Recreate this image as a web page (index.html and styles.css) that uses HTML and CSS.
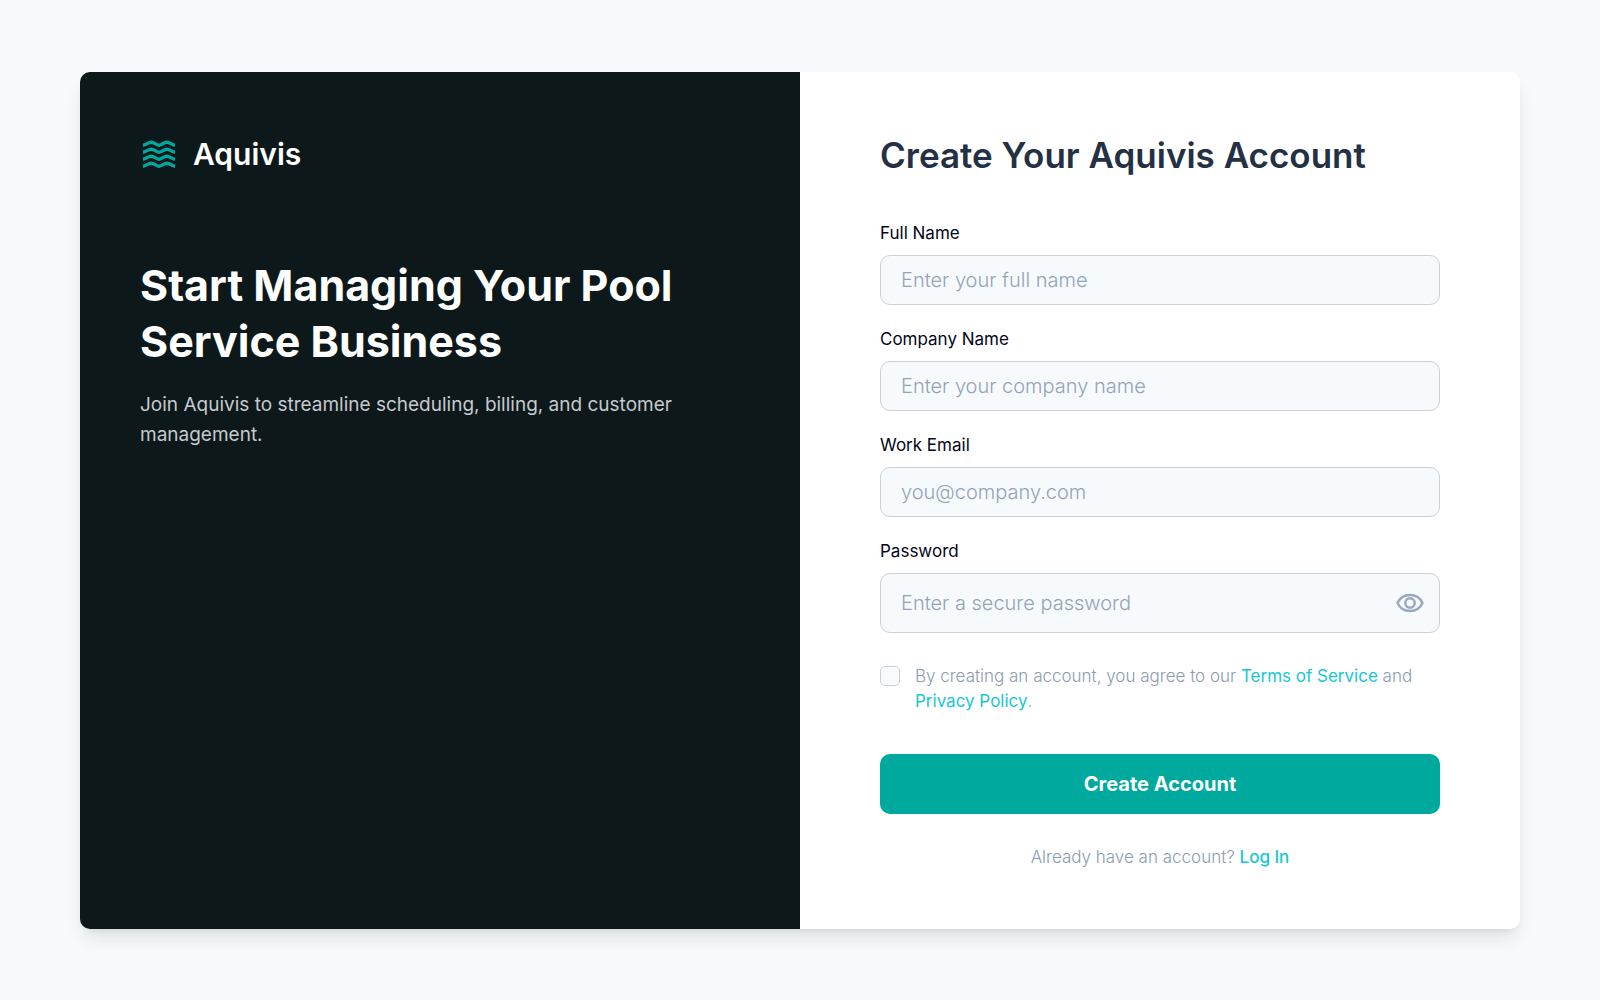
FILE: index.html
```html
<!DOCTYPE html>
<html lang="en">
<head>
  <meta charset="utf-8">
  <meta name="viewport" content="width=device-width, initial-scale=1">
  <title>Create Your Aquivis Account</title>
  <link rel="stylesheet" href="styles.css">
</head>
<body>
  <main class="card">
    <section class="intro">
      <div class="brand">
        <svg class="brand-icon" viewBox="0 0 38 36" fill="none" stroke="currentColor" stroke-width="3.4" aria-hidden="true">
          <path d="M3 9.200C6.500 8.800 8 6.200 11.200 6.200S15.800 9.200 19 9.200 23.600 6.200 26.800 6.200 31.500 8.800 35 9.200"/>
          <path d="M3 16.200C6.500 15.800 8 13.200 11.200 13.200S15.800 16.200 19 16.200 23.600 13.200 26.800 13.200 31.500 15.800 35 16.200"/>
          <path d="M3 23.200C6.500 22.800 8 20.200 11.200 20.200S15.800 23.200 19 23.200 23.600 20.200 26.800 20.200 31.500 22.800 35 23.200"/>
          <path d="M3 30.200C6.500 29.800 8 27.200 11.200 27.200S15.800 30.200 19 30.200 23.600 27.200 26.800 27.200 31.500 29.800 35 30.200"/>
        </svg>
        <span class="brand-name">Aquivis</span>
      </div>
      <h1 class="headline">Start Managing Your Pool Service Business</h1>
      <p class="tagline">Join Aquivis to streamline scheduling, billing, and customer management.</p>
    </section>
    <section class="signup">
      <h2 class="title">Create Your Aquivis Account</h2>
      <form class="form">
        <div class="fields">
          <div class="field">
            <label class="label" for="name">Full Name</label>
            <input class="input" id="name" type="text" placeholder="Enter your full name">
          </div>
          <div class="field">
            <label class="label" for="company">Company Name</label>
            <input class="input" id="company" type="text" placeholder="Enter your company name">
          </div>
          <div class="field">
            <label class="label" for="email">Work Email</label>
            <input class="input" id="email" type="email" placeholder="you@company.com">
          </div>
          <div class="field">
            <label class="label" for="password">Password</label>
            <div class="password">
              <input class="input input-tall" id="password" type="password" placeholder="Enter a secure password">
              <button class="reveal" type="button" aria-label="Show password">
                <svg class="eye" viewBox="0 0 30 30" fill="none" stroke="currentColor" stroke-width="2.5" aria-hidden="true">
                  <path d="M2.500 15C5 9.500 9.500 7 15 7s10 2.500 12.500 8C25 20.500 20.500 23 15 23S5 20.500 2.500 15Z" stroke-linejoin="round"/>
                  <circle cx="15" cy="15" r="4.700"/>
                </svg>
              </button>
            </div>
          </div>
        </div>
        <div class="terms">
          <input class="checkbox" id="agree" type="checkbox">
          <label class="terms-text" for="agree">By creating an account, you agree to our <a class="link" href="#">Terms of Service</a> and <a class="link" href="#">Privacy Policy</a>.</label>
        </div>
        <button class="submit" type="submit">Create Account</button>
      </form>
      <p class="login">Already have an account? <a class="link link-strong" href="#">Log In</a></p>
    </section>
  </main>
</body>
</html>
```
FILE: styles.css
```css
* {
  box-sizing: border-box;
}

body {
  margin: 0;
  min-height: 100vh;
  padding: 40px 5%;
  display: flex;
  align-items: center;
  justify-content: center;
  background: #f7fafd;
  font-family: Inter, "Liberation Sans", sans-serif;
}

.card {
  width: 100%;
  max-width: 1440px;
  display: grid;
  grid-template-columns: 1fr 1fr;
  background: #fff;
  border-radius: 10px;
  overflow: hidden;
  box-shadow: 0 12px 19px -4px rgba(0, 0, 0, 0.1), 0 5px 8px -5px rgba(0, 0, 0, 0.1);
}

.intro {
  padding: 60px;
  background: #0d181a;
  color: #fff;
}

.brand {
  display: flex;
  align-items: center;
  gap: 15px;
  height: 45px;
  margin-bottom: 80px;
}

.brand-icon {
  width: 38px;
  height: 36px;
  color: #00a99d;
}

.brand-name {
  font-size: 30px;
  font-weight: 600;
}

.headline {
  margin: 0 0 21px;
  font-size: 43px;
  line-height: 56px;
  font-weight: 700;
}

.tagline {
  margin: 0;
  font-size: 19px;
  line-height: 30px;
  color: #c6c9ce;
}

.signup {
  padding: 60px 80px 59px;
}

.title {
  margin: 0 0 40px;
  font-size: 35px;
  line-height: 47px;
  font-weight: 600;
  color: #243044;
}

.form,
.field {
  display: flex;
  flex-direction: column;
}

.fields {
  display: flex;
  flex-direction: column;
  gap: 20px;
}

.field {
  gap: 8px;
}

.label {
  font-size: 17px;
  line-height: 28px;
  color: #020617;
}

.input {
  width: 100%;
  height: 50px;
  padding: 0 20px;
  border: 1px solid #cbd0d9;
  border-radius: 10px;
  background: #f7fafd;
  font: 300 20px/28px Inter, "Liberation Sans", sans-serif;
  color: #020617;
}

.input::placeholder {
  color: #94a3b8;
  opacity: 1;
}

.input-tall {
  height: 60px;
  padding-right: 60px;
}

.password {
  position: relative;
  display: flex;
}

.reveal {
  position: absolute;
  top: 0;
  bottom: 0;
  right: 15px;
  padding: 0;
  border: 0;
  background: none;
  color: #9aa9bd;
}

.eye {
  display: block;
  width: 30px;
  height: 30px;
}

.terms {
  display: flex;
  gap: 15px;
  margin: 31px 0 40px;
}

.checkbox {
  appearance: none;
  flex: none;
  width: 20px;
  height: 20px;
  margin: 2px 0 0;
  border: 1px solid #cbd0d9;
  border-radius: 5px;
  background: #f9fafb;
}

.terms-text,
.login {
  font-size: 17px;
  font-weight: 300;
  color: #8b9bb2;
}

.terms-text {
  line-height: 25px;
}

.link {
  color: #16c7d6;
  font-weight: 400;
  text-decoration: none;
}

.link-strong {
  font-weight: 500;
}

.submit {
  height: 60px;
  border: 0;
  border-radius: 10px;
  background: #00a99d;
  font: 700 20px/30px Inter, "Liberation Sans", sans-serif;
  color: #fff;
}

.login {
  margin: 30px 0 0;
  line-height: 26px;
  text-align: center;
}
```
